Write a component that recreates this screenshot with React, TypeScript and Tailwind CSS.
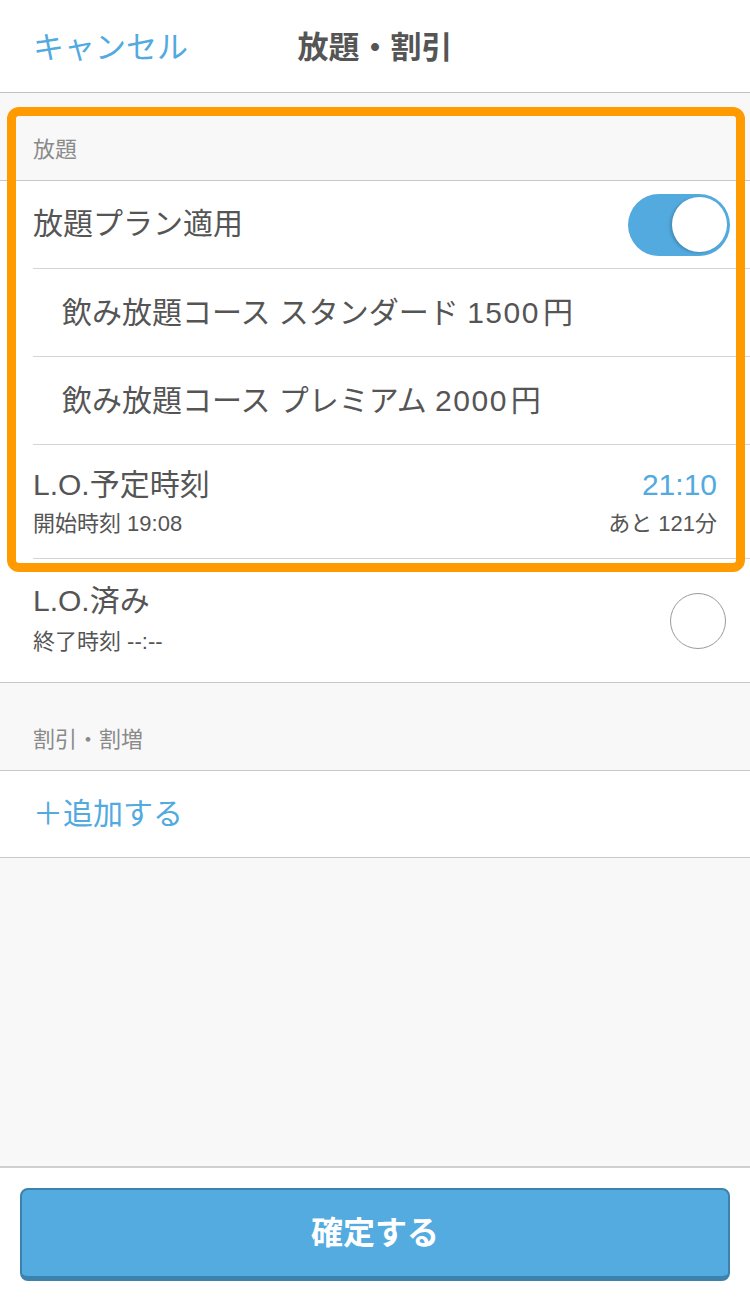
import React from "react";

const font = { fontFamily: '"Liberation Sans", "Noto Sans CJK JP", "Noto Sans", sans-serif' };

function SectionHeader({ label }: { label: string }) {
  return (
    <div className="h-[88px] flex items-end pl-[33px] pb-[19px] border-b border-[#c8c8c8] bg-[#f8f8f8]">
      <span className="text-[22px] text-[#8a8a8a] leading-none">{label}</span>
    </div>
  );
}

function Row({
  children,
  height,
  last = false,
}: {
  children: React.ReactNode;
  height: string;
  last?: boolean;
}) {
  return (
    <div className={`bg-white pl-[33px] ${last ? "border-b border-[#c8c8c8]" : ""}`}>
      <div className={`${height} flex items-center ${last ? "" : "border-b border-[#d4d4d4]"}`}>
        {children}
      </div>
    </div>
  );
}

function Course({ name, price }: { name: string; price: string }) {
  return (
    <div className="pl-[29px] text-[30px] leading-none">
      {name} <span className="tracking-[1.5px]">{price}</span>
      <span className="ml-[3px]">円</span>
    </div>
  );
}

export default function App() {
  return (
    <div className="relative w-[750px] h-[1298px] flex flex-col bg-white text-[#555]" style={font}>
      {/* Header */}
      <div className="h-[93px] shrink-0 relative flex items-center pt-[2px] border-b border-[#c0c0c0] bg-white">
        <span className="pl-[33px] text-[31px] text-[#52aadf] leading-none">キャンセル</span>
        <span className="absolute left-0 right-0 text-center text-[31px] font-bold text-[#555] leading-none pointer-events-none">
          放題・割引
        </span>
      </div>

      {/* Content */}
      <div className="flex-1 bg-[#f8f8f8]">
        <SectionHeader label="放題" />

        <Row height="h-[88px]">
          <div className="flex-1 text-[30px] leading-none pb-[2px]">放題プラン適用</div>
          <div className="mr-[20px] w-[102px] h-[62px] rounded-full bg-[#52aadf] flex items-center justify-end pr-[3px]">
            <div className="w-[55px] h-[55px] rounded-full bg-white shadow-[-2px_1px_3px_rgba(0,0,0,0.18)]" />
          </div>
        </Row>

        <Row height="h-[88px]">
          <Course name="飲み放題コース スタンダード" price="1500" />
        </Row>

        <Row height="h-[88px]">
          <Course name="飲み放題コース プレミアム" price="2000" />
        </Row>

        <Row height="h-[114px]">
          <div className="flex-1 flex flex-col gap-[13px] pt-[2px]">
            <span className="text-[30px] leading-none">L.O.予定時刻</span>
            <span className="text-[22px] leading-none">開始時刻 19:08</span>
          </div>
          <div className="flex flex-col items-end gap-[13px] pr-[33px] pt-[2px]">
            <span className="text-[30px] text-[#52aadf] leading-none">21:10</span>
            <span className="text-[22px] leading-none">あと 121分</span>
          </div>
        </Row>

        <Row height="h-[123px]" last>
          <div className="flex-1 flex flex-col gap-[15px] pb-[2px]">
            <span className="text-[30px] leading-none">L.O.済み</span>
            <span className="text-[22px] leading-none">終了時刻 --:--</span>
          </div>
          <div className="mr-[24px] w-[56px] h-[56px] rounded-full border border-[#9a9a9a] bg-white" />
        </Row>

        <SectionHeader label="割引・割増" />

        <div className="bg-white h-[87px] pl-[33px] flex items-center border-b border-[#c8c8c8]">
          <span className="text-[30px] text-[#52aadf] leading-none">＋追加する</span>
        </div>
      </div>

      {/* Footer */}
      <div className="h-[132px] shrink-0 border-t-2 border-[#cfcfcf] bg-white px-[20px] pt-[20px]">
        <button className="w-full h-[93px] rounded-[8px] bg-[#54abe0] border-2 border-b-[5px] border-[#3d82ad] text-white text-[32px] font-bold leading-none">
          確定する
        </button>
      </div>

      {/* Highlight overlay */}
      <div className="absolute left-[7px] top-[107px] w-[738px] h-[465px] rounded-[12px] border-[9px] border-[#ff9a00] pointer-events-none" />
    </div>
  );
}
